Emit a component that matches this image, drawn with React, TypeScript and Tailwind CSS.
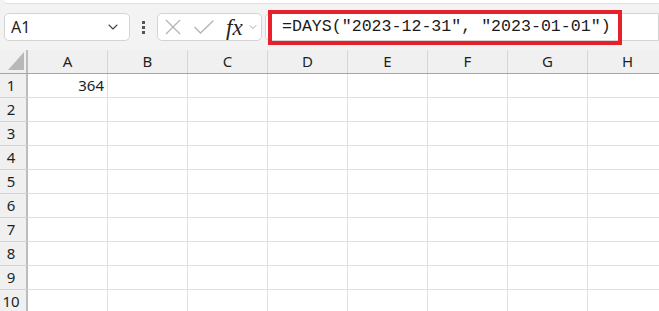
import { ChevronDown } from 'lucide-react';

const cols = ['A', 'B', 'C', 'D', 'E', 'F', 'G', 'H'];
const rows = [1, 2, 3, 4, 5, 6, 7, 8, 9, 10];

export default function App() {
  return (
    <div
      className="relative w-[659px] h-[311px] overflow-hidden bg-white text-[#1f1f1f]"
      style={{ fontFamily: '"Noto Sans", "Liberation Sans", sans-serif' }}
    >
      {/* top edge of the ribbon above */}
      <div className="h-[4px] bg-[#f3f3f3]">
        <div className="ml-[4px] h-[3px] bg-white rounded-bl-[4px] shadow-[0_1px_1px_rgba(0,0,0,0.08)]" />
      </div>

      {/* formula bar */}
      <div className="flex items-center h-[46px] bg-[#f3f3f3] pl-[4px] pb-[9px] pt-[9px]">
        <div className="flex items-center justify-between w-[126px] h-[28px] bg-white border border-[#d4d4d4] rounded-[5px] pl-[6px] pr-[8px]">
          <span className="text-[16px] leading-none">A1</span>
          <ChevronDown size={16} strokeWidth={1.6} className="text-[#444]" />
        </div>

        <div className="flex flex-col items-center gap-[2px] w-[27px]">
          <span className="w-[3px] h-[3px] bg-[#555]" />
          <span className="w-[3px] h-[3px] bg-[#555]" />
          <span className="w-[3px] h-[3px] bg-[#555]" />
        </div>

        <div className="flex items-center w-[105px] h-[28px] bg-white border border-[#d4d4d4] rounded-[5px] pl-[5px]">
          <svg width="18" height="18" viewBox="0 0 18 18" className="ml-[1px]">
            <path d="M2 2 L16 16 M16 2 L2 16" stroke="#b4b4b4" strokeWidth="1.3" fill="none" />
          </svg>
          <svg width="22" height="16" viewBox="0 0 22 16" className="ml-[11px]">
            <path d="M1.5 8 L7.5 14 L20.5 1.5" stroke="#b4b4b4" strokeWidth="1.3" fill="none" />
          </svg>
          <span
            className="ml-[11px] text-[23px] italic leading-none text-[#222]"
            style={{ fontFamily: '"Liberation Serif", "DejaVu Serif", serif' }}
          >
            fx
          </span>
          <ChevronDown size={12} strokeWidth={1.5} className="ml-[4px] text-[#8a8a8a]" />
        </div>

        <div className="flex-1 h-[28px] ml-[3px] bg-white border border-[#d4d4d4] rounded-l-[5px]" />
      </div>

      {/* highlighted formula */}
      <div className="absolute left-[268px] top-[10px] w-[354px] h-[35px] border-[4px] border-[#e8202a] flex items-center pl-[10px]">
        <span
          className="text-[16.6px] leading-none text-[#1a1a1a]"
          style={{ fontFamily: '"Liberation Mono", "DejaVu Sans Mono", monospace' }}
        >
          =DAYS("2023-12-31", "2023-01-01")
        </span>
      </div>

      {/* sheet grid */}
      <div className="flex h-[24px] bg-[#f0f0f0] border-b border-[#a6a6a6]">
        <div className="relative w-[28px] shrink-0 border-r-2 border-[#bdbdbd]">
          <svg width="16" height="18" viewBox="0 0 16 18" className="absolute left-[8px] top-[2px]">
            <path d="M16 0 L16 18 L0 18 Z" fill="#b8b8b8" />
          </svg>
        </div>
        {cols.map((c) => (
          <div
            key={c}
            className="w-[80px] shrink-0 border-r border-[#d4d4d4] flex items-center justify-center text-[15px]"
          >
            {c}
          </div>
        ))}
      </div>

      {rows.map((r) => (
        <div key={r} className="flex h-[24px]">
          <div className="w-[28px] shrink-0 bg-[#f0f0f0] border-r-2 border-b border-r-[#bdbdbd] border-b-[#d4d4d4] flex items-center justify-center pr-[4px] text-[15px]">
            {r}
          </div>
          {cols.map((c) => (
            <div
              key={c}
              className="w-[80px] shrink-0 border-r border-b border-[#e0e0e0] flex items-center justify-end pr-[3px] text-[15px]"
            >
              {r === 1 && c === 'A' ? '364' : ''}
            </div>
          ))}
        </div>
      ))}
    </div>
  );
}
